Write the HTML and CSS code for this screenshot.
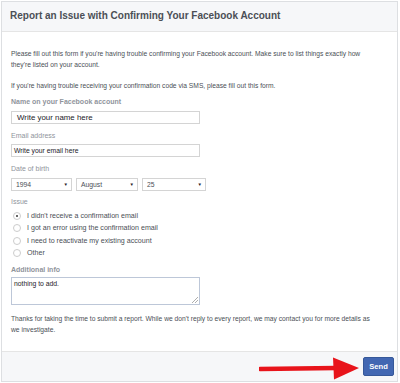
FILE: index.html
```html
<!DOCTYPE html>
<html>
<head>
  <title>Report an Issue</title>
  <link rel="stylesheet" href="styles.css">
</head>
<body>
  <div class="dialog">
    <div class="header">Report an Issue with Confirming Your Facebook Account</div>
    <div class="content">
      <p class="intro">Please fill out this form if you're having trouble confirming your Facebook account. Make sure to list things exactly how they're listed on your account.</p>
      <p class="intro sms">If you're having trouble receiving your confirmation code via SMS, please fill out this form.</p>

      <div class="group name-group">
        <label class="field-label strong">Name on your Facebook account</label>
        <div class="input big">Write your name here</div>
      </div>

      <div class="group">
        <label class="field-label">Email address</label>
        <div class="input">Write your email here</div>
      </div>

      <div class="group">
        <label class="field-label">Date of birth</label>
        <div class="selects">
          <div class="select year">1994<span class="caret">&#9660;</span></div>
          <div class="select month">August<span class="caret">&#9660;</span></div>
          <div class="select day">25<span class="caret">&#9660;</span></div>
        </div>
      </div>

      <div class="group issue-group">
        <label class="field-label">Issue</label>
        <div class="radios">
          <div class="radio-row"><span class="radio checked"></span>I didn't receive a confirmation email</div>
          <div class="radio-row"><span class="radio"></span>I got an error using the confirmation email</div>
          <div class="radio-row"><span class="radio"></span>I need to reactivate my existing account</div>
          <div class="radio-row"><span class="radio"></span>Other</div>
        </div>
      </div>

      <div class="group info-group">
        <label class="field-label strong">Additional info</label>
        <div class="textarea">nothing to add.
          <svg class="grip" width="6" height="6" viewBox="0 0 6 6"><path d="M6 0L0 6M6 3L3 6" stroke="#999" stroke-width="0.8"/></svg>
        </div>
      </div>

      <p class="outro">Thanks for taking the time to submit a report. While we don't reply to every report, we may contact you for more details as we investigate.</p>
    </div>
    <div class="footer">
      <svg class="arrow" width="100" height="26" viewBox="0 0 100 26">
        <path d="M1 15 L77 14" stroke="#e8141b" stroke-width="4.5" stroke-linecap="round"/>
        <path d="M74 3.5 L100 14 L75 25.5 Z" fill="#e8141b"/>
      </svg>
      <button class="send">Send</button>
    </div>
  </div>
</body>
</html>
```

FILE: styles.css
```css
body {
  margin: 0;
  padding: 1px 0 0 1px;
  font-family: "Liberation Sans", Arial, sans-serif;
  color: #4b4f56;
  background: #fff;
}
.dialog {
  box-sizing: border-box;
  border: 1px solid #dddfe2;
  width: 397px;
  height: 381px;
  display: flex;
  flex-direction: column;
}
.header {
  background-color: #f6f7f9;
  border-bottom: 1px solid #e5e5e5;
  height: 29px;
  line-height: 28px;
  padding-left: 8px;
  font-size: 10px;
  font-weight: bold;
  color: #4b4f56;
}
.content {
  flex: 1;
  padding: 17px 9px 0 9px;
}
.intro {
  max-width: 368px;
  font-size: 6.7px;
  line-height: 10.5px;
  margin: 0 0 11px 0;
}
.intro.sms {
  margin-bottom: 5.5px;
}
.group {
  margin-top: 7px;
}
.name-group {
  margin-top: 0;
}
.issue-group {
  margin-top: 6px;
}
.info-group {
  margin-top: 6px;
}
.field-label {
  display: block;
  font-size: 7px;
  line-height: 10px;
  color: #90949c;
  margin-bottom: 3.5px;
}
.field-label.strong {
  font-weight: bold;
}
.input {
  box-sizing: border-box;
  width: 189px;
  height: 13px;
  line-height: 11px;
  border: 1px solid #d4d4d4;
  padding: 0 2px;
  font-size: 6.8px;
  color: #1d2129;
}
.input.big {
  font-size: 7.9px;
  padding-left: 5px;
}
.selects {
  display: flex;
  gap: 4px;
}
.select {
  box-sizing: border-box;
  display: flex;
  justify-content: space-between;
  align-items: center;
  height: 13px;
  border: 1px solid #d4d4d4;
  padding: 0 3px 0 4px;
  font-size: 6.8px;
  color: #4b4f56;
}
.select.year { width: 61px; }
.select.month { width: 62px; }
.select.day { width: 64px; }
.caret {
  font-size: 4.5px;
  color: #1d2129;
}
.radios {
  margin-top: 1px;
}
.radio-row {
  display: flex;
  align-items: center;
  height: 12.3px;
  font-size: 7.1px;
  color: #4b4f56;
}
.radio {
  box-sizing: border-box;
  width: 8px;
  height: 8px;
  border: 1px solid #ccc;
  border-radius: 50%;
  margin: 0 6px 0 2px;
  display: flex;
  align-items: center;
  justify-content: center;
}
.radio.checked::after {
  content: "";
  width: 2px;
  height: 2px;
  border-radius: 50%;
  background: #333;
}
.textarea {
  box-sizing: border-box;
  position: relative;
  width: 189px;
  height: 28px;
  border: 1px solid #bdc7d8;
  padding: 1px 2px;
  font-size: 6.8px;
  line-height: 10px;
  color: #1d2129;
  margin-top: -2px;
}
.grip {
  position: absolute;
  right: 1px;
  bottom: 1px;
}
.outro {
  max-width: 365px;
  font-size: 6.7px;
  line-height: 11px;
  margin: 8px 0 0 0;
}
.footer {
  background-color: #f6f7f9;
  border-top: 1px solid #e5e5e5;
  height: 29px;
  display: flex;
  align-items: center;
  justify-content: flex-end;
  padding-right: 3px;
}
.arrow {
  margin-right: 4px;
}
.send {
  background-color: #4267b2;
  border: 1px solid #365899;
  color: #fff;
  font-family: "Liberation Sans", Arial, sans-serif;
  font-weight: bold;
  font-size: 7.6px;
  width: 31px;
  height: 19px;
  padding: 0;
  border-radius: 2px;
}
```
